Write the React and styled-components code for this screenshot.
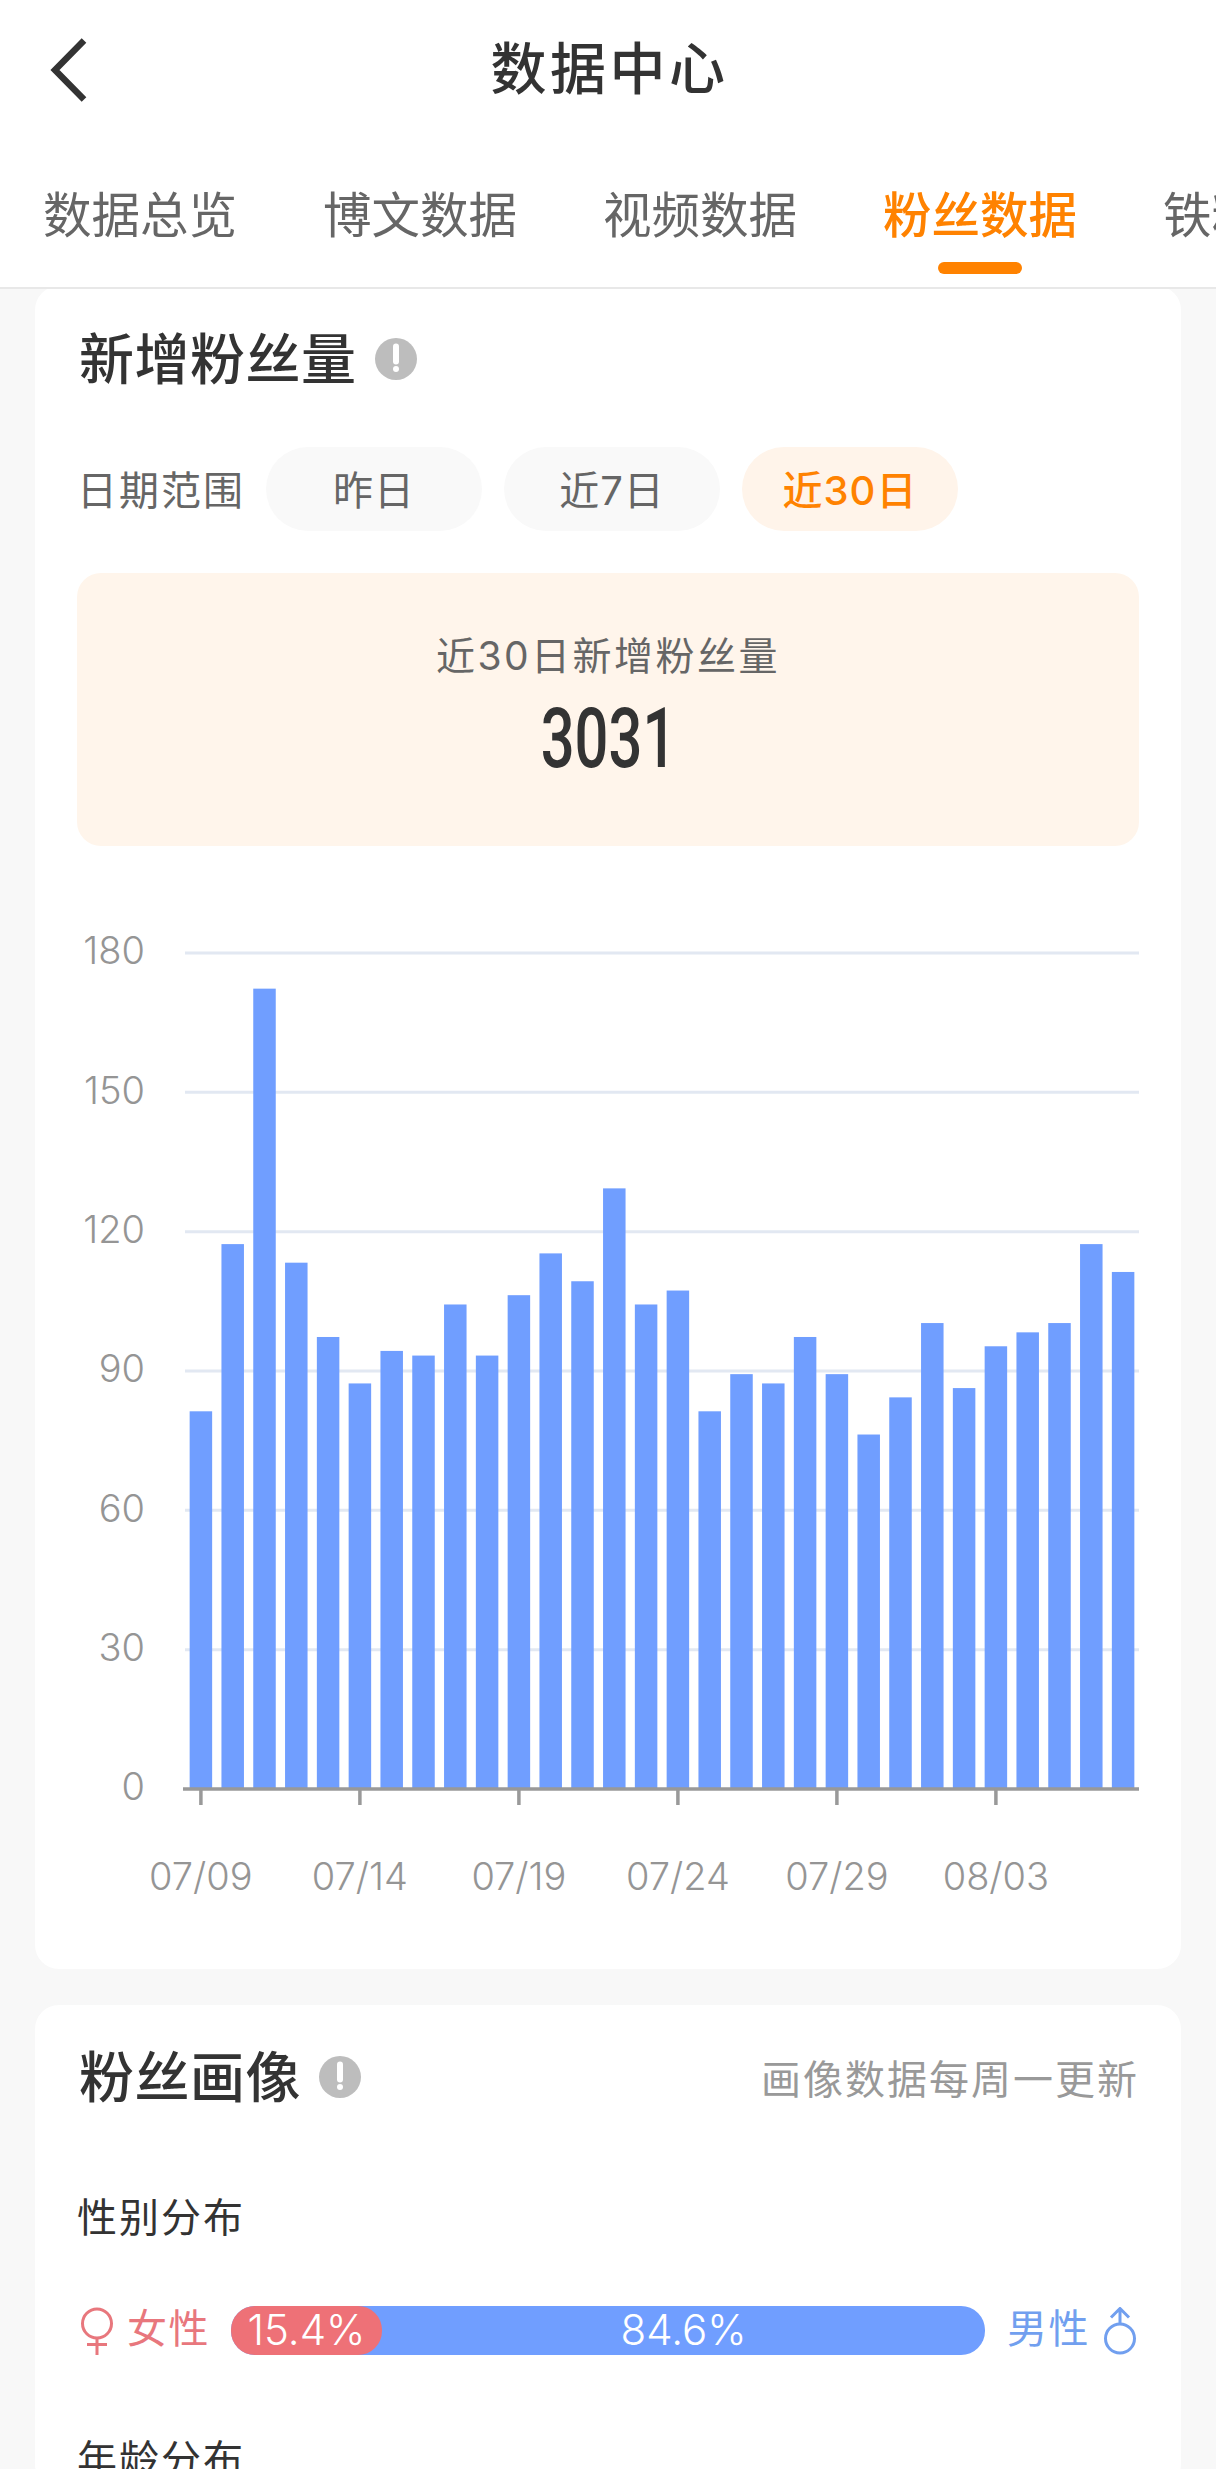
import React from "react";
import styled, { createGlobalStyle } from "styled-components";

const GlobalStyle = createGlobalStyle`
  html, body {
    margin: 0;
    padding: 0;
    background: #f8f8f8;
  }
  body {
    font-family: Inter, "Noto Sans CJK SC", sans-serif;
  }
`;

const tabs = ["数据总览", "博文数据", "视频数据", "粉丝数据", "铁粉数据"];
const ranges = ["昨日", "近7日", "近30日"];
const fans = [
  81, 117, 172, 113, 97, 87, 94, 93, 104, 93, 106, 115, 109, 129, 104, 107, 81,
  89, 87, 97, 89, 76, 84, 100, 86, 95, 98, 100, 117, 111
];
const dates = ["07/09", "07/14", "07/19", "07/24", "07/29", "08/03"];

const PLOT_LEFT = 185;
const PLOT_RIGHT = 1139;
const PLOT_TOP = 953;
const PLOT_BOTTOM = 1789;
const BAND = (PLOT_RIGHT - PLOT_LEFT) / fans.length;
const yOf = v => PLOT_BOTTOM - (v / 180) * (PLOT_BOTTOM - PLOT_TOP);

const BarChart = () => (
  <ChartSvg viewBox="77 846 1062 1123">
    {[30, 60, 90, 120, 150, 180].map(v => (
      <line
        key={v}
        x1={PLOT_LEFT}
        x2={PLOT_RIGHT}
        y1={yOf(v)}
        y2={yOf(v)}
        stroke="#e2e8f2"
        strokeWidth="3"
      />
    ))}
    {[0, 30, 60, 90, 120, 150, 180].map(v => (
      <AxisText key={v} x="145" y={yOf(v) + 1} textAnchor="end" dominantBaseline="middle">
        {v}
      </AxisText>
    ))}
    {fans.map((v, i) => (
      <rect
        key={i}
        x={PLOT_LEFT + BAND * i + (BAND - 22.5) / 2}
        y={yOf(v) - 1.5}
        width="22.5"
        height={PLOT_BOTTOM - yOf(v) + 1.5}
        fill="#709eff"
      />
    ))}
    <line x1="183" x2={PLOT_RIGHT} y1={PLOT_BOTTOM} y2={PLOT_BOTTOM} stroke="#999" strokeWidth="3.5" />
    {dates.map((d, i) => {
      const x = PLOT_LEFT + BAND * (i * 5 + 0.5);
      return (
        <g key={d}>
          <line x1={x} x2={x} y1={PLOT_BOTTOM} y2="1805" stroke="#999" strokeWidth="3.5" />
          <AxisText x={x} y="1879.5" textAnchor="middle" dominantBaseline="middle">
            {d}
          </AxisText>
        </g>
      );
    })}
  </ChartSvg>
);

const InfoIcon = () => (
  <InfoSvg viewBox="0 0 42 42">
    <circle cx="21" cy="21" r="21" fill="#bdbdbd" />
    <path d="M21 8.5v15" stroke="#fff" strokeWidth="6" strokeLinecap="round" />
    <circle cx="21" cy="31" r="3" fill="#fff" />
  </InfoSvg>
);

const FemaleIcon = () => (
  <GenderSvg viewBox="0 0 34 48" fill="none" stroke="#e8777d" strokeWidth="3">
    <circle cx="17" cy="16.5" r="14.5" />
    <path d="M17 31v17M7 37.5h20" />
  </GenderSvg>
);

const MaleIcon = () => (
  <GenderSvg viewBox="0 0 34 48" fill="none" stroke="#719fef" strokeWidth="3">
    <circle cx="17" cy="31.5" r="14.5" />
    <path d="M17 17V2M8 10.5l9-9 9 9" />
  </GenderSvg>
);

const App = () => (
  <Page>
    <GlobalStyle />
    <TopBar>
      <BackIcon viewBox="0 0 40 66" fill="none">
        <path d="M37 3.5L8 33l29 29.5" stroke="#333" strokeWidth="6.5" />
      </BackIcon>
      <PageTitle>数据中心</PageTitle>
    </TopBar>
    <TabBar>
      {tabs.map((t, i) => (
        <Tab key={t}>
          <TabText $active={i === 3}>{t}</TabText>
          <TabLine $active={i === 3} />
        </Tab>
      ))}
    </TabBar>
    <Content>
      <Card $first>
        <CardHead>
          <CardTitle>新增粉丝量</CardTitle>
          <InfoIcon />
        </CardHead>
        <RangeRow>
          <RangeLabel>日期范围</RangeLabel>
          {ranges.map((r, i) => (
            <Pill key={r} $active={i === 2}>
              {r}
            </Pill>
          ))}
        </RangeRow>
        <SummaryBox>
          <SummaryLabel>近30日新增粉丝量</SummaryLabel>
          <SummaryValue>3031</SummaryValue>
        </SummaryBox>
        <BarChart />
      </Card>
      <Card>
        <CardHead>
          <CardTitle>粉丝画像</CardTitle>
          <InfoIcon />
          <CardNote>画像数据每周一更新</CardNote>
        </CardHead>
        <SectionTitle $gap="83px">性别分布</SectionTitle>
        <GenderRow>
          <GenderSide $color="#e8777d">
            <FemaleIcon />
            <GenderText>女性</GenderText>
          </GenderSide>
          <GenderBar>
            <FemalePart>15.4%</FemalePart>
            <MalePart>84.6%</MalePart>
          </GenderBar>
          <GenderSide $color="#719fef" $right>
            <GenderText>男性</GenderText>
            <MaleIcon />
          </GenderSide>
        </GenderRow>
        <SectionTitle $gap="77px">年龄分布</SectionTitle>
      </Card>
    </Content>
  </Page>
);

export default App;

const Page = styled.div`
  width: 1216px;
  height: 2469px;
  overflow: hidden;
  background: #f8f8f8;
`;

const TopBar = styled.div`
  height: 138px;
  background: #fff;
  display: flex;
  align-items: center;
  justify-content: center;
  position: relative;
`;

const BackIcon = styled.svg`
  position: absolute;
  left: 47px;
  top: 37px;
  width: 40px;
  height: 66px;
`;

const PageTitle = styled.div`
  font-size: 56px;
  font-weight: 500;
  letter-spacing: 3.5px;
  padding-left: 3px;
  line-height: 70px;
  color: #333;
`;

const TabBar = styled.div`
  height: 149px;
  background: #fff;
  border-bottom: 2px solid #e8e8e8;
  display: flex;
  gap: 86px;
  padding-left: 43px;
  overflow: hidden;
  position: relative;
  z-index: 1;
`;

const Tab = styled.div`
  flex: none;
  display: flex;
  flex-direction: column;
  align-items: center;
  padding-top: 46px;
`;

const TabText = styled.div`
  font-size: 48.5px;
  line-height: 64px;
  color: ${p => (p.$active ? "#ff8200" : "#666")};
  font-weight: ${p => (p.$active ? 500 : 400)};
`;

const TabLine = styled.div`
  width: 84px;
  height: 12px;
  margin-top: 14px;
  border-radius: 6px;
  background: ${p => (p.$active ? "#ff8200" : "transparent")};
`;

const Content = styled.div`
  padding: 0 35px;
`;

const Card = styled.div`
  background: #fff;
  border-radius: 24px;
  padding: ${p => (p.$first ? "43px" : "42px")} 42px 0;
  margin-top: ${p => (p.$first ? "-3px" : "36px")};
  height: ${p => (p.$first ? "1683px" : "auto")};
  box-sizing: border-box;
`;

const CardHead = styled.div`
  display: flex;
  align-items: center;
  height: 60px;
  padding-left: 2px;
`;

const CardTitle = styled.div`
  font-size: 55px;
  font-weight: 500;
  line-height: 60px;
  letter-spacing: 0.5px;
  color: #333;
`;

const InfoSvg = styled.svg`
  width: 42px;
  height: 42px;
  margin-left: 18px;
`;

const CardNote = styled.div`
  margin-left: auto;
  font-size: 40px;
  letter-spacing: 2px;
  color: #999;
`;

const RangeRow = styled.div`
  display: flex;
  align-items: center;
  gap: 22px;
  margin-top: 58px;
`;

const RangeLabel = styled.div`
  flex: none;
  width: 167px;
  white-space: nowrap;
  font-size: 40px;
  letter-spacing: 2px;
  color: #666;
  padding-bottom: 3px;
`;

const Pill = styled.div`
  flex: none;
  width: 216px;
  height: 84px;
  box-sizing: border-box;
  padding-bottom: 3px;
  border-radius: 42px;
  display: flex;
  align-items: center;
  justify-content: center;
  font-size: 40px;
  letter-spacing: 1px;
  background: ${p => (p.$active ? "#fff4ea" : "#f9f9f9")};
  color: ${p => (p.$active ? "#ff8200" : "#666")};
  font-weight: ${p => (p.$active ? 500 : 400)};
`;

const SummaryBox = styled.div`
  margin-top: 42px;
  height: 273px;
  box-sizing: border-box;
  padding-top: 58px;
  border-radius: 24px;
  background: #fff5eb;
  display: flex;
  flex-direction: column;
  align-items: center;
`;

const SummaryLabel = styled.div`
  font-size: 39px;
  line-height: 50px;
  letter-spacing: 2.5px;
  color: #666;
`;

const SummaryValue = styled.div`
  margin-top: 16px;
  font-family: Roboto, sans-serif;
  font-size: 84px;
  line-height: 84px;
  font-weight: 500;
  color: #333;
  transform: scaleX(0.71);
`;

const ChartSvg = styled.svg`
  display: block;
  width: 1062px;
  height: 1123px;
`;

const AxisText = styled.text`
  font-family: Inter, sans-serif;
  font-size: 38px;
  font-weight: 300;
  fill: #959595;
`;

const SectionTitle = styled.div`
  margin-top: ${p => p.$gap};
  font-size: 40px;
  line-height: 56px;
  letter-spacing: 2px;
  color: #333;
`;

const GenderRow = styled.div`
  display: flex;
  align-items: center;
  margin-top: 60px;
`;

const GenderSide = styled.div`
  width: 154px;
  height: 49px;
  box-sizing: border-box;
  padding-left: ${p => (p.$right ? "22px" : "3px")};
  display: flex;
  align-items: center;
  gap: 13px;
  font-size: 40px;
  letter-spacing: 1.5px;
  color: ${p => p.$color};
`;

const GenderText = styled.span`
  line-height: 49px;
  padding-bottom: 4px;
`;

const GenderSvg = styled.svg`
  flex: none;
  width: 34px;
  height: 48px;
`;

const GenderBar = styled.div`
  width: 754px;
  height: 49px;
  border-radius: 24px;
  background: #709eff;
  display: flex;
  font-size: 42px;
  font-weight: 300;
  line-height: 47px;
  color: #fff;
  text-align: center;
`;

const FemalePart = styled.div`
  width: 151px;
  border-radius: 24px;
  background: #ee7177;
`;

const MalePart = styled.div`
  flex: 1;
`;
